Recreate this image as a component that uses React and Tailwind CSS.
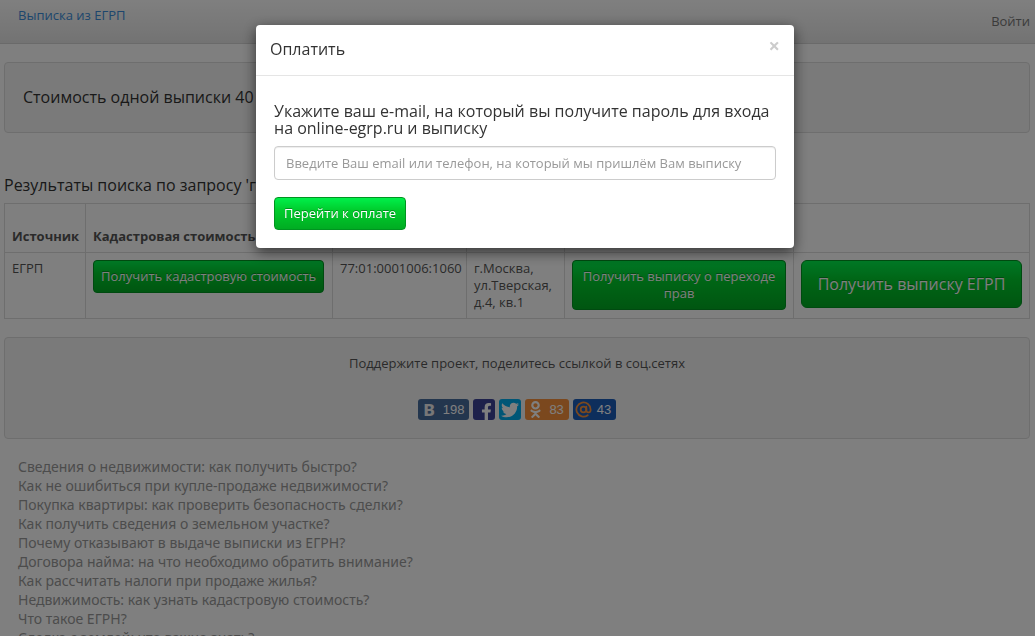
import React, { useState } from 'react';
import { FaFacebookF, FaTwitter, FaOdnoklassniki } from 'react-icons/fa';
import { AtSign } from 'lucide-react';

const articles = [
  'Сведения о недвижимости: как получить быстро?',
  'Как не ошибиться при купле-продаже недвижимости?',
  'Покупка квартиры: как проверить безопасность сделки?',
  'Как получить сведения о земельном участке?',
  'Почему отказывают в выдаче выписки из ЕГРН?',
  'Договора найма: на что необходимо обратить внимание?',
  'Как рассчитать налоги при продаже жилья?',
  'Недвижимость: как узнать кадастровую стоимость?',
  'Что такое ЕГРН?',
  'Сделка с землей: что важно знать?',
];

const head = 'border border-[#ddd] p-[7px] text-left align-bottom font-bold';
const cell = 'border border-[#ddd] p-[7px] align-top';

const sizes = {
  small: 'rounded px-[7px] py-[7px] leading-[17px]',
  normal: 'rounded px-[9px] py-[7px] leading-[17px]',
  large: 'w-full rounded-md px-3 py-3 text-base leading-[22px]',
};

function GreenButton({ size = 'small', children, ...props }) {
  return (
    <button
      type="button"
      className={`border border-[#009420] bg-linear-to-b from-[#00f04a] via-[#00cc2c] via-40% to-[#00ac22] text-white [text-shadow:0_-1px_0_rgba(0,0,0,0.3)] ${sizes[size]}`}
      {...props}
    >
      {children}
    </button>
  );
}

function Share({ label, color, count, children }) {
  return (
    <a
      href="#"
      aria-label={label}
      className={`flex h-[21px] items-center rounded-[3px] text-white ${color} ${count ? 'gap-[5px] pr-[5px]' : ''}`}
    >
      {children}
      {count && <span className="font-['Liberation_Sans',sans-serif] text-[13px] leading-5">{count}</span>}
    </a>
  );
}

function PayDialog({ onClose }) {
  const [contact, setContact] = useState('');

  return (
    <div className="fixed inset-0 z-50 flex items-start justify-center bg-black/50 pt-[25px] pl-[15px]">
      <div
        role="dialog"
        aria-labelledby="pay-title"
        className="w-[538px] max-w-full rounded bg-white shadow-[0_4px_14px_rgba(0,0,0,0.6)]"
      >
        <div className="flex items-start justify-between border-b border-[#e5e5e5] px-[14px] pt-[14px] pb-4">
          <h4 id="pay-title" className="text-base leading-5 text-[#333]">Оплатить</h4>
          <button
            type="button"
            aria-label="Закрыть"
            onClick={onClose}
            className="text-xl leading-[14px] font-bold text-[#ccc]"
          >
            ×
          </button>
        </div>
        <form className="px-[18px] pt-[27px] pb-[18px]" onSubmit={(e) => e.preventDefault()}>
          <label htmlFor="contact" className="block text-base leading-[17px] text-[#333]">
            Укажите ваш e-mail, на который вы получите пароль для входа на online-egrp.ru и выписку
          </label>
          <input
            id="contact"
            type="text"
            value={contact}
            onChange={(e) => setContact(e.target.value)}
            placeholder="Введите Ваш email или телефон, на который мы пришлём Вам выписку"
            className="mt-[9px] mb-[17px] block h-[34px] w-full rounded border border-[#ccc] bg-white px-[11px] shadow-[inset_0_1px_1px_rgba(0,0,0,0.075)] placeholder:text-[#999]"
          />
          <GreenButton size="normal">Перейти к оплате</GreenButton>
        </form>
      </div>
    </div>
  );
}

function App() {
  const [isOpen, setIsOpen] = useState(true);
  const open = () => setIsOpen(true);

  return (
    <div className="h-screen overflow-hidden bg-white font-['Open_Sans',sans-serif] text-[13px] leading-[17px] text-[#555]">
      <nav className="flex h-11 items-start justify-between border-b border-[#d4d4d4] bg-linear-to-b from-white to-[#e6e6e6] pr-[5px] pl-[18px]">
        <a href="#" className="pt-[7px] text-[#3b8dda]">Выписка из ЕГРП</a>
        <a href="#" className="pt-[13px] text-[#777]">Войти</a>
      </nav>

      <main className="pr-[5px] pl-1">
        <div className="mt-[18px] rounded border border-[#dcdcdc] bg-[#f5f5f5] px-[18px] py-[26px]">
          <p className="text-base leading-[17px] text-[#333]">Стоимость одной выписки 40 рублей</p>
        </div>

        <h4 className="mt-[43px] mb-[9px] text-base leading-[18px] text-[#333]">
          Результаты поиска по запросу 'г.Москва, ул.Тверская, д.4, кв.1'
        </h4>

        <table className="w-full table-fixed border-collapse">
          <colgroup>
            <col className="w-[81px]" />
            <col className="w-[247px]" />
            <col className="w-[134px]" />
            <col className="w-[98px]" />
            <col className="w-[229px]" />
            <col />
          </colgroup>
          <thead>
            <tr>
              <th className={head}>Источник</th>
              <th className={head}>Кадастровая стоимость</th>
              <th className={head}>Номер</th>
              <th className={head}>Адрес</th>
              <th className={head}>Переход прав</th>
              <th className={head}><span className="block h-[34px]" /></th>
            </tr>
          </thead>
          <tbody>
            <tr>
              <td className={cell}>ЕГРП</td>
              <td className={cell}><GreenButton onClick={open}>Получить кадастровую стоимость</GreenButton></td>
              <td className={cell}>77:01:0001006:1060</td>
              <td className={cell}>г.Москва, ул.Тверская, д.4, кв.1</td>
              <td className={cell}><GreenButton onClick={open}>Получить выписку о переходе прав</GreenButton></td>
              <td className={cell}><GreenButton size="large" onClick={open}>Получить выписку ЕГРП</GreenButton></td>
            </tr>
          </tbody>
        </table>

        <div className="mt-[18px] rounded border border-[#dcdcdc] bg-[#f5f5f5] pt-[17px] pb-[18px] text-center">
          <p>Поддержите проект, поделитесь ссылкой в соц.сетях</p>
          <div className="mt-[27px] flex justify-center gap-1">
            <Share label="ВКонтакте" color="bg-[#476c9c]" count="198">
              <span className="w-5 pl-[3px] font-['Roboto',sans-serif] text-[17px] leading-5 font-black text-[#eee]">B</span>
            </Share>
            <Share label="Facebook" color="bg-[#3c4296]">
              <span className="flex w-[22px] justify-end">
                <FaFacebookF className="mt-[3px] size-[17px]" />
              </span>
            </Share>
            <Share label="Twitter" color="bg-[#00aced]">
              <FaTwitter className="mx-[2px] size-[18px]" />
            </Share>
            <Share label="Одноклассники" color="bg-[#f6913c]" count="83">
              <FaOdnoklassniki className="ml-[2px] size-[17px]" />
            </Share>
            <Share label="Mail.ru" color="bg-[#1b5cb8]" count="43">
              <AtSign className="ml-[2px] size-[17px] text-[#f6913c]" strokeWidth={2.5} />
            </Share>
          </div>
        </div>

        <ul className="mt-[18px] pl-[14px] font-['Noto_Sans',sans-serif] text-sm leading-[19px]">
          {articles.map((title) => (
            <li key={title}>
              <a href="#" className="text-[#999]">{title}</a>
            </li>
          ))}
        </ul>
      </main>

      {isOpen && <PayDialog onClose={() => setIsOpen(false)} />}
    </div>
  );
}

export default App;
